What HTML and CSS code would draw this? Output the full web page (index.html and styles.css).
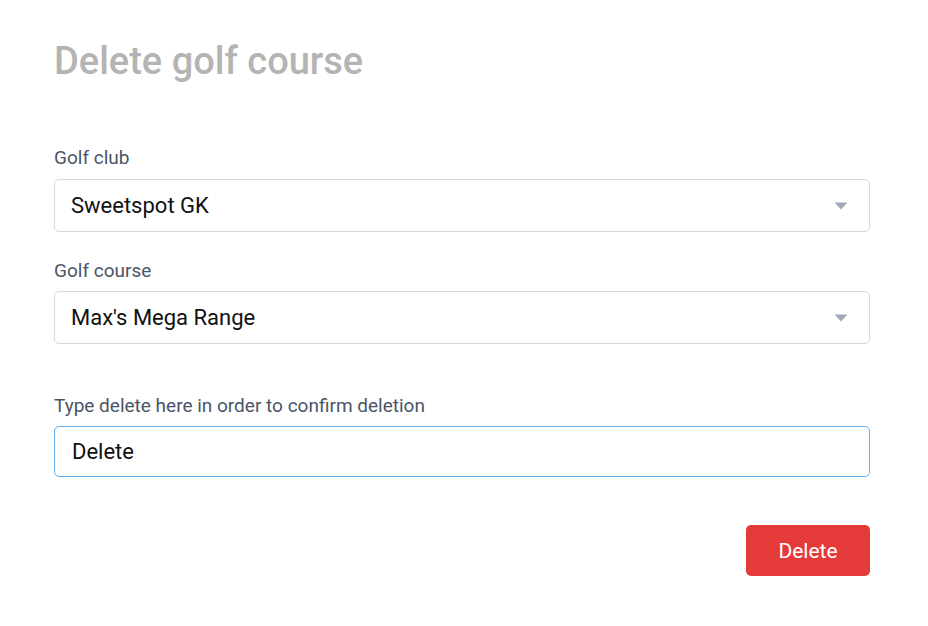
FILE: index.html
```html
<!DOCTYPE html>
<html>
<head>
<meta charset="utf-8">
<link rel="stylesheet" href="styles.css">
</head>
<body>
<div class="page">
  <h1 class="title">Delete golf course</h1>
  <div class="field first">
    <div class="label">Golf club</div>
    <div class="select"><span>Sweetspot GK</span><svg class="caret" width="14" height="8" viewBox="0 0 14 8"><path d="M0.5 0.5 H13.5 L7 7.5 Z" fill="#a0aab8"/></svg></div>
  </div>
  <div class="field second">
    <div class="label">Golf course</div>
    <div class="select"><span>Max's Mega Range</span><svg class="caret" width="14" height="8" viewBox="0 0 14 8"><path d="M0.5 0.5 H13.5 L7 7.5 Z" fill="#a0aab8"/></svg></div>
  </div>
  <div class="field third">
    <div class="label">Type delete here in order to confirm deletion</div>
    <div class="input">Delete</div>
  </div>
  <div class="actions">
    <button class="btn-delete">Delete</button>
  </div>
</div>
</body>
</html>
```
FILE: styles.css
```css
html, body {
  margin: 0;
  padding: 0;
  background: #ffffff;
}
body {
  font-family: Roboto, "Liberation Sans", sans-serif;
}
.page {
  width: 816px;
  padding: 40px 0 0 54px;
  display: flex;
  flex-direction: column;
}
.title {
  margin: 0;
  font-size: 38px;
  line-height: 42px;
  font-weight: 500;
  color: #b4b4b4;
}
.field {
  display: flex;
  flex-direction: column;
}
.field.first { margin-top: 64px; }
.field.second { margin-top: 27px; }
.field.third { margin-top: 50px; }
.label {
  font-size: 19px;
  line-height: 24px;
  color: #4a5568;
  margin-bottom: 8px;
}
.field.first .label { margin-bottom: 9px; }
.select {
  box-sizing: border-box;
  height: 53px;
  border: 1px solid #d5d9de;
  border-radius: 5px;
  display: flex;
  align-items: center;
  justify-content: space-between;
  padding: 0 21px 0 16px;
  font-size: 22px;
  color: #111111;
}
.caret {
  display: block;
}
.input {
  box-sizing: border-box;
  height: 51px;
  border: 1px solid #66b0ec;
  border-radius: 5px;
  display: flex;
  align-items: center;
  padding: 0 17px;
  font-size: 22px;
  color: #111111;
}
.actions {
  display: flex;
  justify-content: flex-end;
  margin-top: 48px;
}
.btn-delete {
  width: 124px;
  height: 51px;
  border: none;
  border-radius: 5px;
  background: #e53a3a;
  color: #ffffff;
  font-family: Roboto, "Liberation Sans", sans-serif;
  font-size: 21px;
  padding: 0;
}
```
